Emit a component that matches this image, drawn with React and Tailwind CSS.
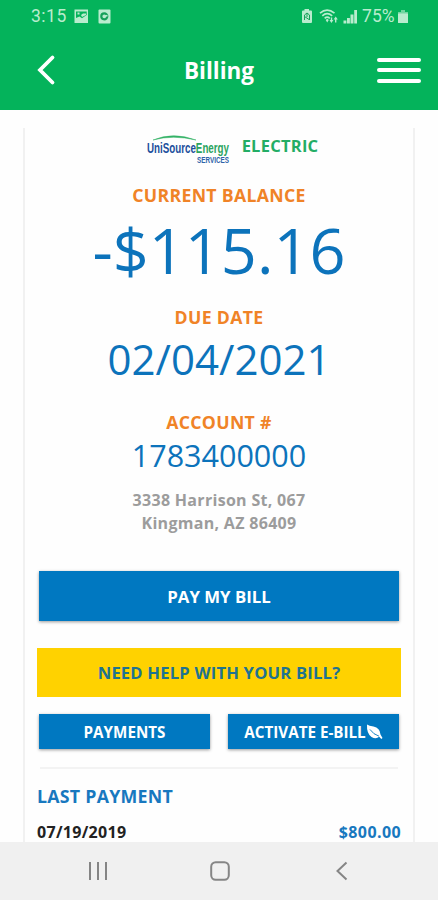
function StatusBar() {
  return (
    <div className="flex h-8 items-center pl-[31px] pr-[29px] font-[Roboto,sans-serif] text-[17.5px] leading-8 text-[#b9ecce]">
      <span className="tracking-[0.5px]">3:15</span>
      <svg className="ml-[7px]" width="15" height="15" viewBox="0 0 15 15">
        <path fill="currentColor" fillRule="evenodd" d="M0.5 0.5H14V14H0.5ZM2 2.5V9L5.5 7.5L8 9.3L12.7 6V2.5Z" />
        <path fill="currentColor" d="M3.5 3.5H5.5V5.5H3.5ZM7 6L9 4.5H12V6L8 8Z" />
      </svg>
      <svg className="ml-2" width="15" height="15" viewBox="0 0 15 15">
        <rect x="1.5" y="0.5" width="12" height="14" rx="1" fill="currentColor" />
        <circle cx="7.3" cy="7.3" r="3" fill="none" stroke="#16a159" strokeWidth="2.2" />
        <path d="M7 7.4L10.5 6.4" stroke="#b9ecce" strokeWidth="1.6" />
      </svg>

      <svg className="ml-auto" width="12" height="16" viewBox="0 0 12 16">
        <path fill="currentColor" d="M3.5 1H8V2.5H10Q11 2.5 11 3.5V14Q11 15 10 15H2Q1 15 1 14V3.5Q1 2.5 2 2.5H3.5Z" />
        <path fill="none" stroke="#16a159" strokeWidth="1" d="M3.5 12V7L6 5L8.5 7V12M3.5 8.5L8 11.5M6 5V9" />
      </svg>
      <svg className="ml-[6px]" width="20" height="15" viewBox="0 0 20 15">
        <g fill="none" stroke="currentColor" strokeWidth="1.7">
          <path d="M1 4.2Q8 -1.8 15.5 4.2" />
          <path d="M3.3 6.8Q8 2.6 13.2 6.8" />
          <path d="M5.7 9.3Q8.2 7 10.8 9.3" />
        </g>
        <path fill="currentColor" d="M6.7 11L8.2 9.8L9.8 11L8.2 13.5ZM10.5 11H11.8V8.5H13.2V11H14.4L12.4 14ZM14.6 10.5L16.7 7.5L18.8 10.5H17.4V13.5H16V10.5Z" />
      </svg>
      <svg className="ml-[4px]" width="15" height="15" viewBox="0 0 15 15">
        <path fill="currentColor" d="M0.5 11.5H3.4V14.5H0.5ZM4 9H6.9V14.5H4ZM7.5 5.5H10.5V14.5H7.5ZM11.2 1H14V14.5H11.2Z" />
      </svg>
      <span className="ml-[4px] w-[34px] whitespace-nowrap tracking-[0.1px]">75%</span>
      <svg className="ml-px" width="12" height="15" viewBox="0 0 12 15">
        <path fill="currentColor" d="M4 1H8V3H11V5H1V3H4Z" opacity="0.6" />
        <rect x="1" y="4.5" width="10" height="9.5" rx="0.5" fill="currentColor" />
      </svg>
    </div>
  )
}

function Header() {
  return (
    <header className="h-[110px] shrink-0 bg-[#04b35b]">
      <StatusBar />
      <div className="grid h-[76px] grid-cols-3 items-center pl-[37px] pr-[17px]">
        <button aria-label="Back" className="justify-self-start">
          <svg width="20" height="32" viewBox="0 0 20 32" fill="none" stroke="white" strokeWidth="3.8" strokeLinecap="round">
            <path d="M15.5 3.5L3 16L15.5 28.5" />
          </svg>
        </button>
        <h1 className="translate-x-[-10px] pt-px text-center text-[22.5px] font-bold text-white">Billing</h1>
        <button aria-label="Menu" className="flex w-11 flex-col gap-[6.5px] justify-self-end">
          <span className="h-1 rounded-full bg-white" />
          <span className="h-1 rounded-full bg-white" />
          <span className="h-1 rounded-full bg-white" />
        </button>
      </div>
    </header>
  )
}

function Logo() {
  return (
    <svg width="84" height="36" viewBox="0 0 84 36" className="shrink-0 overflow-visible" fontFamily="'Liberation Sans Narrow', 'Liberation Sans', sans-serif" fontWeight="700">
      <path d="M7 12Q27 3.5 50 12Q27 6.5 7 12Z" fill="#35b267" stroke="#35b267" strokeWidth="0.5" />
      <text x="1" y="24.5" fontSize="15" fill="#1c4f9c" textLength="82" lengthAdjust="spacingAndGlyphs">
        UniSource<tspan fill="#2ba45f">Energy</tspan>
      </text>
      <text x="51" y="34.5" fontSize="9.3" fill="#2f62a8" textLength="32" lengthAdjust="spacingAndGlyphs">SERVICES</text>
    </svg>
  )
}

function LeafIcon() {
  return (
    <svg width="17" height="16" viewBox="0 0 17 16">
      <path fill="white" d="M1 0.5Q3 2 7.5 2.6Q14 4 14.5 10.5L16.5 14L15.3 15L13.2 12.8Q10 15.5 5.5 13Q0.5 9.5 1 0.5Z" />
      <path fill="none" stroke="#0078c1" strokeWidth="0.9" d="M4 5.5Q7.5 10.5 13 12.2" />
    </svg>
  )
}

function Label({ children }) {
  return <h2 className="text-[17.7px] font-bold leading-[26px] tracking-[0.3px] text-[#f08327]">{children}</h2>
}

function BillingCard() {
  return (
    <section className="mx-[23px] mt-[18px] border-x-2 border-[#f1f1f1] px-3 text-center">
      <div className="flex h-9 items-center justify-center gap-[12px] pl-[26px]">
        <Logo />
        <span className="text-[16.5px] font-bold tracking-[0.25px] text-[#23ad65]">ELECTRIC</span>
      </div>

      <div className="mt-[18px]">
        <Label>CURRENT BALANCE</Label>
        <p className="text-[63px] leading-[84px] text-[#0c73bb]">-$115.16</p>
      </div>
      <div className="mt-3">
        <Label>DUE DATE</Label>
        <p className="text-[42px] leading-[58px] text-[#0c73bb]">02/04/2021</p>
      </div>
      <div className="mt-[21px]">
        <Label>ACCOUNT #</Label>
        <p className="text-[30.5px] leading-[41px] text-[#0c73bb]">1783400000</p>
      </div>
      <address className="mt-[13px] text-[16px] font-bold not-italic leading-[23px] tracking-[0.3px] text-[#9c9c9c]">
        3338 Harrison St, 067
        <br />
        Kingman, AZ 86409
      </address>

      <button className="mx-auto mt-[36px] block h-[50px] w-[360px] bg-[#0078c1] pt-px text-[16.8px] font-bold text-white shadow-[0_1px_3px_rgba(0,0,0,0.4)]">
        PAY MY BILL
      </button>
      <button className="mt-[27px] block h-[49px] w-full bg-[#ffd200] pt-px text-[16.6px] font-bold tracking-[0.2px] text-[#1f7390]">
        NEED HELP WITH YOUR BILL?
      </button>
      <div className="mt-[17px] flex justify-between px-[2px]">
        <button className="h-[35px] w-[171px] bg-[#0078c1] pt-px text-[15.2px] font-bold text-white shadow-[0_1px_3px_rgba(0,0,0,0.4)]">
          PAYMENTS
        </button>
        <button className="flex h-[35px] w-[171px] items-center justify-center bg-[#0078c1] pt-px text-[15.2px] font-bold text-white shadow-[0_1px_3px_rgba(0,0,0,0.4)]">
          ACTIVATE E-BILL
          <LeafIcon />
        </button>
      </div>

      <div className="mx-[3px] mt-[18px] h-[2px] bg-[#f3f3f3]" />
      <h2 className="mt-[14px] text-left text-[17.8px] font-bold leading-[27px] tracking-[0.25px] text-[#1878bf]">LAST PAYMENT</h2>
      <div className="mt-[10px] flex justify-between text-[16px] font-bold leading-6">
        <span className="tracking-[0.3px] text-[#222]">07/19/2019</span>
        <span className="tracking-[0.4px] text-[#1878bf]">$800.00</span>
      </div>
    </section>
  )
}

function NavBar() {
  return (
    <nav className="grid h-[58px] shrink-0 grid-cols-3 place-items-center bg-[#f0f0f0] pl-[37px] pr-[35px] text-[#858585]">
      <svg width="20" height="20" viewBox="0 0 20 20" stroke="currentColor" strokeWidth="2">
        <path d="M2 1V19M10 1V19M18 1V19" />
      </svg>
      <svg width="20" height="20" viewBox="0 0 20 20" fill="none" stroke="currentColor" strokeWidth="2">
        <rect x="1.2" y="1.2" width="17.6" height="17.6" rx="4.5" />
      </svg>
      <svg width="20" height="20" viewBox="0 0 20 20" fill="none" stroke="currentColor" strokeWidth="2">
        <path d="M14.5 1.5L5.5 10L14.5 18.5" />
      </svg>
    </nav>
  )
}

export default function App() {
  return (
    <div className="flex h-[900px] w-[438px] flex-col overflow-hidden bg-white font-['Open_Sans',sans-serif]">
      <Header />
      <main className="min-h-0 flex-1 overflow-hidden bg-[#fefefe]">
        <BillingCard />
      </main>
      <NavBar />
    </div>
  )
}
